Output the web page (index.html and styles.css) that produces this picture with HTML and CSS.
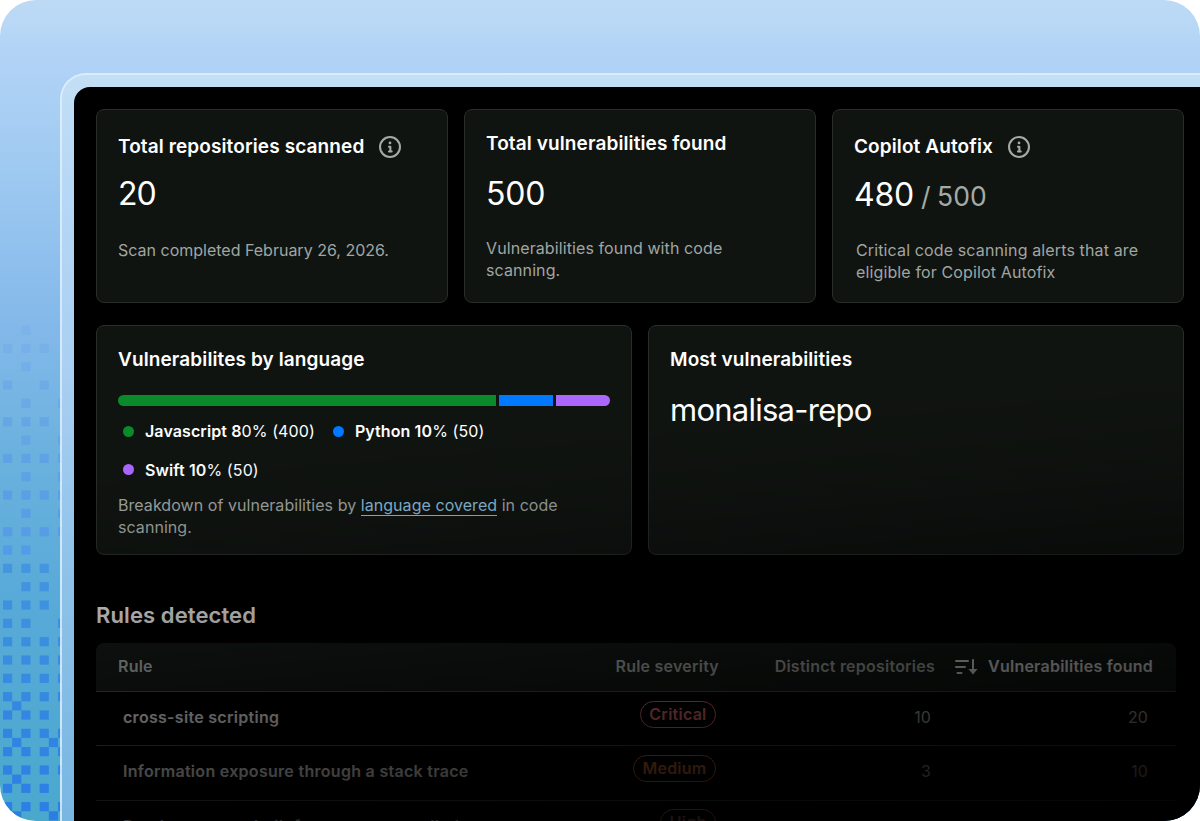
FILE: index.html
```html
<!DOCTYPE html>
<html lang="en">
<head>
<meta charset="utf-8">
<title>Security overview</title>
<link rel="stylesheet" href="styles.css">
</head>
<body>
<div class="stage">
  <svg class="pixels" width="62" height="821" viewBox="0 0 62 821" aria-hidden="true"></svg>
  <div class="frame">
    <main class="panel">
      <section class="row">
        <article class="card stat">
          <h2 class="title with-icon"><span>Total repositories scanned</span>
            <svg class="info" viewBox="0 0 16 16"><path d="M0 8a8 8 0 1 1 16 0A8 8 0 0 1 0 8Zm8-6.5a6.5 6.5 0 1 0 0 13 6.5 6.5 0 0 0 0-13ZM6.5 7.75A.75.75 0 0 1 7.25 7h1a.75.75 0 0 1 .75.75v2.75h.25a.75.75 0 0 1 0 1.5h-2a.75.75 0 0 1 0-1.5h.25v-2h-.25a.75.75 0 0 1-.75-.75ZM8 6a1 1 0 1 1 0-2 1 1 0 0 1 0 2Z"/></svg></h2>
          <p class="value narrow">20</p>
          <p class="note dated">Scan completed February 26, 2026.</p>
        </article>
        <article class="card stat">
          <h2 class="title">Total vulnerabilities found</h2>
          <p class="value">500</p>
          <p class="note">Vulnerabilities found with code<br>scanning.</p>
        </article>
        <article class="card stat">
          <h2 class="title with-icon"><span>Copilot Autofix</span>
            <svg class="info" viewBox="0 0 16 16"><path d="M0 8a8 8 0 1 1 16 0A8 8 0 0 1 0 8Zm8-6.5a6.5 6.5 0 1 0 0 13 6.5 6.5 0 0 0 0-13ZM6.5 7.75A.75.75 0 0 1 7.25 7h1a.75.75 0 0 1 .75.75v2.75h.25a.75.75 0 0 1 0 1.5h-2a.75.75 0 0 1 0-1.5h.25v-2h-.25a.75.75 0 0 1-.75-.75ZM8 6a1 1 0 1 1 0-2 1 1 0 0 1 0 2Z"/></svg></h2>
          <p class="value split"><span>480</span><span class="total">/ 500</span></p>
          <p class="note indent">Critical code scanning alerts that are<br>eligible for Copilot Autofix</p>
        </article>
      </section>

      <section class="row">
        <article class="card wide">
          <h2 class="title">Vulnerabilites by language</h2>
          <div class="bar"><i class="js"></i><i class="py"></i><i class="sw"></i></div>
          <ul class="legend">
            <li><i class="dot js"></i><b>Javascript 8</b>0% (400)</li>
            <li><i class="dot py"></i><b>Python 10</b>% (50)</li>
            <li><i class="dot sw"></i><b>Swift 10</b>% (50)</li>
          </ul>
          <p class="note">Breakdown of vulnerabilities by <a class="link">language covered</a> in code<br>scanning.</p>
        </article>
        <article class="card wide">
          <h2 class="title">Most vulnerabilities</h2>
          <p class="repo">monalisa-repo</p>
        </article>
      </section>

      <section class="rules">
        <h1 class="heading">Rules detected</h1>
        <div class="table">
          <div class="tr head">
            <span class="rule">Rule</span><span class="sev">Rule severity</span><span class="rep">Distinct repositories</span>
            <span class="vul"><svg class="sort" viewBox="0 0 24 20"><path d="M2 5H14M2 11h9M3.5 17h4M19 4v11"/><path class="tip" d="M14.500 13h9L19 18.500Z"/></svg>Vulnerabilities found</span>
          </div>
          <div class="tr">
            <b class="rule">cross-site scripting</b><span class="sev"><em class="pill critical">Critical</em></span><span class="rep">10</span><span class="vul">20</span>
          </div>
          <div class="tr">
            <b class="rule">Information exposure through a stack trace</b><span class="sev"><em class="pill medium">Medium</em></span><span class="rep">3</span><span class="vul">10</span>
          </div>
          <div class="tr">
            <b class="rule">Database query built from user-controlled sources</b><span class="sev"><em class="pill high">High</em></span><span class="rep"></span><span class="vul"></span>
          </div>
        </div>
      </section>
      <div class="fade"></div>
    </main>
  </div>
</div>
<script src="pixels.js"></script>
</body>
</html>
```
FILE: pixels.js
```js
// Scattered squares along the left edge: [row in half steps, columns]
const rows = [
  [0, [2]], [2, [0, 2, 4]], [4, [2]], [6, [0, 4]], [8, [2, 6]], [10, [0, 2, 4]],
  [12, [2, 6]], [14, [0, 2, 4, 6]], [16, [2, 6]], [18, [0, 2, 4, 6]], [20, [2, 6]],
  [22, [0, 2, 4, 6]], [24, [0, 2]], [26, [0, 2, 4]], [28, [2, 4]], [30, [0, 2, 4]],
  [32, [0, 2, 6]], [34, [0, 2, 4, 6]], [36, [0, 2, 4, 6]], [38, [0, 2, 4, 6]],
  [40, [0, 2, 4, 6]], [41, [1]], [42, [0, 2, 4]], [44, [0, 2, 4, 6]], [45, [1, 5]],
  [46, [0, 2, 4, 6]], [48, [0, 2, 4, 6]], [49, [1]], [50, [0, 2, 4]],
  [52, [0, 2, 4, 6]], [53, [1, 5]]
];
const step = 9.165;
const svg = document.querySelector('.pixels');
for (const [r, cols] of rows) {
  for (const c of cols) {
    const q = document.createElementNS('http://www.w3.org/2000/svg', 'rect');
    q.setAttribute('x', 3 + c * step);
    q.setAttribute('y', 325.5 + r * step);
    q.setAttribute('width', step);
    q.setAttribute('height', step);
    q.setAttribute('fill', r < 26 ? '#4f8ff0' : '#2a7ce6');
    q.setAttribute('opacity', r < 26 ? 0.12 + r * 0.02 : 0.46 + (r - 26) * 0.018);
    svg.appendChild(q);
  }
}
```
FILE: styles.css
```css
* { box-sizing: border-box; margin: 0; padding: 0; }
body { background: #fff; font-family: Inter, "Liberation Sans", sans-serif; overflow: hidden; }
.stage {
  position: relative; width: 1200px; height: 820.5px; border-radius: 36px; overflow: hidden;
  padding: 73px 0 0 60px;
  background: linear-gradient(180deg, #bddaf5 0, #b8d8f5 25px, #b2d3f6 50px, #a9cff4 110px, #97c5ef 210px, #84b9ea 320px, #6ab1de 460px, #58aad8 600px, #4aa8cd 821px);
}
.pixels { position: absolute; left: 0; top: 0; }
.frame {
  position: relative; height: 800px; width: 1180px; padding: 12px 0 0 12px;
  border: 2px solid rgba(226, 242, 255, .85); border-radius: 26px 0 0 0;
  background: linear-gradient(180deg, #c3dff5 0, #b9d9f6 80px, #a9cff2 300px, #8ec2e8 500px, #78b6e2 748px);
  background-clip: padding-box;
}
.panel { position: relative; height: 760px; background: #000; border-radius: 16px 0 0 0; padding: 22px 0 0 22px; overflow: hidden; }
.row { display: flex; gap: 16px; width: 1088px; margin-bottom: 22px; }
.card { flex: 1; background: #101411; border: 1px solid #2a2d2b; border-radius: 8px; padding: 21px; color: #fff; }
.stat { height: 194px; }
.wide { height: 230px; }
.title { font-size: 19px; line-height: 26px; font-weight: 600; letter-spacing: .11px; white-space: nowrap; }
.with-icon { display: flex; align-items: center; gap: 15px; line-height: 31px; }
.info { width: 22px; height: 22px; fill: #a3aba6; }
.value { font-size: 32px; line-height: 40px; height: 40px; margin-top: 17px; letter-spacing: -.2px; }
.with-icon + .value { margin-top: 12px; }
.narrow { letter-spacing: -1px; }
.value.split { display: flex; align-items: baseline; gap: 7px; padding-top: 1px; }
.total { color: #a3aba6; font-size: 26.500px; letter-spacing: 0; word-spacing: -1px; }
.note { font-size: 16px; line-height: 22px; letter-spacing: .1px; color: #a0a6a2; margin-top: 23px; white-space: nowrap; }
.with-icon ~ .note { margin-top: 25px; }
.dated { letter-spacing: 0; }
.indent { padding-left: 2px; letter-spacing: .13px; }
.bar { display: flex; gap: 3px; height: 11px; margin: 22px 0 0 -.5px; border-radius: 6px; overflow: hidden; }
.bar i { flex: 0 0 54px; }
.bar .js { flex: 1; }
.js { background: #0b8a2c; }
.py { background: #0079ff; }
.sw { background: #a967fb; }
.legend { list-style: none; display: flex; flex-wrap: wrap; column-gap: 18px; margin-top: 6px; padding-left: 5px; font-size: 16px; line-height: 38.5px; letter-spacing: .1px; }
.legend li { display: flex; align-items: center; white-space: pre; }
.legend b { font-weight: 600; }
.dot { width: 11px; height: 11px; border-radius: 50%; margin-right: 11px; }
.wide .note { margin-top: 5px; letter-spacing: .05px; }
.link { color: #8cbfdc; border-bottom: 1.5px solid #8cbfdc; }
.repo { font-size: 31px; line-height: 40px; margin-top: 17px; letter-spacing: -.75px; }
.rules { width: 1080px; padding-top: 24px; }
.heading { font-size: 22px; line-height: 28px; font-weight: 600; letter-spacing: .1px; color: #fff; }
.table { margin-top: 14px; }
.tr { display: grid; grid-template-columns: 500px 123px 216px 1fr; height: 54.3px; align-items: center; font-size: 16px; letter-spacing: .1px; border-bottom: 1px solid #4c4e4d; color: #d2d6d3; padding: 0 28px 3px 0; }
.head { height: 49px; background: #151b17; border-radius: 8px 8px 0 0; font-weight: 600; letter-spacing: .23px; padding: 0 23px 2px 0; color: #b4bab6; }
.rule { padding-left: 27px; font-weight: 600; white-space: nowrap; }
b.rule { letter-spacing: .29px; color: #fff; }
.head .rule { padding-left: 22px; }
.sev, .rep, .vul { text-align: right; white-space: nowrap; }
.tr .rep { padding-right: 4px; }
.head .rep { padding-right: 0; }
.vul { display: flex; align-items: center; justify-content: flex-end; gap: 10px; }
.head .vul { color: #fff; }
.sev { padding-right: 3px; }
.head .sev { padding-right: 0; }
.sort { width: 24px; height: 20px; fill: none; stroke: currentColor; stroke-width: 2; stroke-linecap: round; }
.sort .tip { fill: currentColor; stroke: none; }
.pill { display: inline-flex; align-items: center; height: 27px; padding: 0 8.5px 1px; border: 1.5px solid; border-radius: 14px; font-style: normal; font-weight: 600; letter-spacing: .25px; margin-bottom: 6px; }
.critical { color: #ff7b82; }
.medium { color: #f0803e; }
.high { color: #ff9a9a; }
.fade { position: absolute; inset: 0; pointer-events: none; background: linear-gradient(175deg, rgba(0,0,0,0) 380px, rgba(0,0,0,.12) 450px, rgba(0,0,0,.36) 535px, rgba(0,0,0,.62) 638px, rgba(0,0,0,.72) 690px, rgba(0,0,0,.79) 722px, rgba(0,0,0,.88) 775px, rgba(0,0,0,.97) 830px); }
```
